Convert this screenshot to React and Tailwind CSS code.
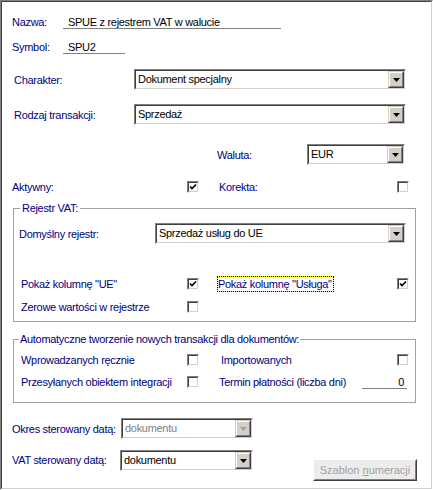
const navy = 'text-[#000080]';

const Arrow = ({ disabled }) => (
    <div className="w-[16px] h-full border border-t-[#d4d0c8] border-l-[#d4d0c8] border-r-[#404040] border-b-[#404040]">
        <div className="w-full h-full flex items-center justify-center bg-[#d4d0c8] border border-t-white border-l-white border-r-[#808080] border-b-[#808080]">
            <svg width="7" height="4" viewBox="0 0 7 4">
                <path d="M0 0 H7 L3.5 4 Z" fill={disabled ? '#a0a0a0' : '#000000'} />
            </svg>
        </div>
    </div>
);

const Combo = ({ value, className, disabled }) => (
    <div className={`${className} h-[21px] border border-t-[#808080] border-l-[#808080] border-r-white border-b-white`}>
        <div className="w-full h-full flex bg-white border border-t-[#404040] border-l-[#404040] border-r-[#d4d0c8] border-b-[#d4d0c8]">
            <span className={`flex-1 pl-[2px] leading-[17px] whitespace-nowrap overflow-hidden ${disabled ? 'text-[#808080]' : 'text-black'}`}>
                {value}
            </span>
            <Arrow disabled={disabled} />
        </div>
    </div>
);

const Check = ({ checked }) => (
    <div className="w-[12px] h-[12px] shrink-0 border border-t-[#808080] border-l-[#808080] border-r-white border-b-white">
        <div className="w-full h-full flex items-center justify-center bg-white border border-t-[#404040] border-l-[#404040] border-r-[#d4d0c8] border-b-[#d4d0c8]">
            {checked && (
                <svg width="8" height="8" viewBox="0 0 8 8">
                    <path d="M1 3.5 L3 5.5 L7 1.5" fill="none" stroke="#000" strokeWidth="1.6" />
                </svg>
            )}
        </div>
    </div>
);

const Label = ({ className = '', children }) => (
    <span className={`${className} ${navy} whitespace-nowrap leading-[16px] shrink-0`}>{children}</span>
);

export default function App() {
    return (
        <div className="w-[433px] h-[490px] font-['Liberation_Sans',Arial,sans-serif] text-[11px] tracking-[-0.3px] border border-t-[#808080] border-l-[#808080] border-r-white border-b-white">
            <div className="w-full h-full bg-white pl-[10px] pt-[12px] border border-t-[#404040] border-l-[#404040] border-r-[#d4d0c8] border-b-[#d4d0c8]">
                {/* Nazwa / Symbol */}
                <div className="flex items-start h-[16px]">
                    <Label className="w-[51px]">Nazwa:</Label>
                    <div className="w-[218px] h-[15px] border-b border-[#808080] pl-[5px] leading-[16px] text-black whitespace-nowrap">
                        SPUE z rejestrem VAT w walucie
                    </div>
                </div>
                <div className="flex items-start h-[16px] mt-[9px]">
                    <Label className="w-[51px]">Symbol:</Label>
                    <div className="w-[62px] h-[15px] border-b border-[#808080] pl-[5px] leading-[16px] text-black">
                        SPU2
                    </div>
                </div>

                {/* Charakter / Rodzaj */}
                <div className="flex items-center h-[21px] mt-[14px]">
                    <Label className="w-[122px] pl-[2px]">Charakter:</Label>
                    <Combo className="w-[272px]" value="Dokument specjalny" />
                </div>
                <div className="flex items-center h-[21px] mt-[14px]">
                    <Label className="w-[122px] pl-[2px]">Rodzaj transakcji:</Label>
                    <Combo className="w-[272px]" value="Sprzedaż" />
                </div>

                {/* Waluta */}
                <div className="flex items-center h-[21px] mt-[19px]">
                    <Label className="w-[90px] ml-[205px]">Waluta:</Label>
                    <Combo className="w-[98px]" value="EUR" />
                </div>

                {/* Aktywny / Korekta */}
                <div className="flex items-center h-[16px] mt-[14px]">
                    <Label className="w-[175px]">Aktywny:</Label>
                    <Check checked />
                    <Label className="w-[178px] ml-[20px]">Korekta:</Label>
                    <Check />
                </div>

                {/* Rejestr VAT */}
                <fieldset className="w-[403px] ml-[1px] mt-[5px] border border-[#a0a0a0] pb-[6px]">
                    <legend className={`ml-[6px] px-[2px] leading-[16px] ${navy}`}>Rejestr VAT:</legend>
                    <div className="flex items-center h-[21px] mt-[7px] pl-[5px]">
                        <Label className="w-[136px]">Domyślny rejestr:</Label>
                        <Combo className="w-[251px]" value="Sprzedaż usług do UE" />
                    </div>
                    <div className="flex items-center h-[16px] mt-[32px]">
                        <Label className="w-[173px] pl-[7px]">Pokaż kolumnę "UE"</Label>
                        <Check checked />
                        <div className="w-[180px] ml-[18px] shrink-0">
                            <span className="inline-block border border-dotted border-black bg-[#ffff00]">
                                <span className={`block bg-white leading-[14px] pr-[1px] whitespace-nowrap ${navy}`}>
                                    Pokaż kolumnę "Usługa"
                                </span>
                            </span>
                        </div>
                        <Check checked />
                    </div>
                    <div className="flex items-center h-[16px] mt-[7px]">
                        <Label className="w-[173px] pl-[7px]">Zerowe wartości w rejestrze</Label>
                        <Check />
                    </div>
                </fieldset>

                {/* Automatyczne tworzenie */}
                <fieldset className="w-[403px] ml-[1px] mt-[9px] border border-[#a0a0a0] pb-[12px]">
                    <legend className={`ml-[5px] px-[1px] leading-[16px] ${navy}`}>
                        Automatyczne tworzenie nowych transakcji dla dokumentów:
                    </legend>
                    <div className="flex items-center h-[16px] mt-[5px]">
                        <Label className="w-[173px] pl-[7px]">Wprowadzanych ręcznie</Label>
                        <Check />
                        <Label className="w-[178px] ml-[20px] pl-[2px]">Importowanych</Label>
                        <Check />
                    </div>
                    <div className="flex items-center h-[16px] mt-[6px]">
                        <Label className="w-[173px] pl-[7px]">Przesyłanych obiektem integracji</Label>
                        <Check />
                        <Label className="w-[143px] ml-[20px]">Termin płatności (liczba dni)</Label>
                        <div className="w-[45px] h-[15px] self-start border-b border-[#808080] pr-[3px] text-right leading-[16px] text-black">
                            0
                        </div>
                    </div>
                </fieldset>

                {/* Okres / VAT sterowany */}
                <div className="flex items-center h-[21px] mt-[15px]">
                    <Label className="w-[109px]">Okres sterowany datą:</Label>
                    <Combo className="w-[132px]" value="dokumentu" disabled />
                </div>
                <div className="flex items-start mt-[11px]">
                    <span className={`w-[108px] leading-[21px] whitespace-nowrap ${navy}`}>VAT sterowany datą:</span>
                    <Combo className="w-[133px]" value="dokumentu" />
                    <button
                        type="button"
                        disabled
                        className="ml-[60px] mt-[9px] w-[104px] h-[22px] border border-t-white border-l-white border-r-[#404040] border-b-[#404040]"
                    >
                        <div className="w-full h-full flex items-center justify-center bg-[#ececec] border border-t-[#ececec] border-l-[#ececec] border-r-[#808080] border-b-[#808080] text-[#a0a0a0] tracking-[0px]">
                            Szablon&nbsp;<span className="underline">n</span>umeracji
                        </div>
                    </button>
                </div>
            </div>
        </div>
    );
}
